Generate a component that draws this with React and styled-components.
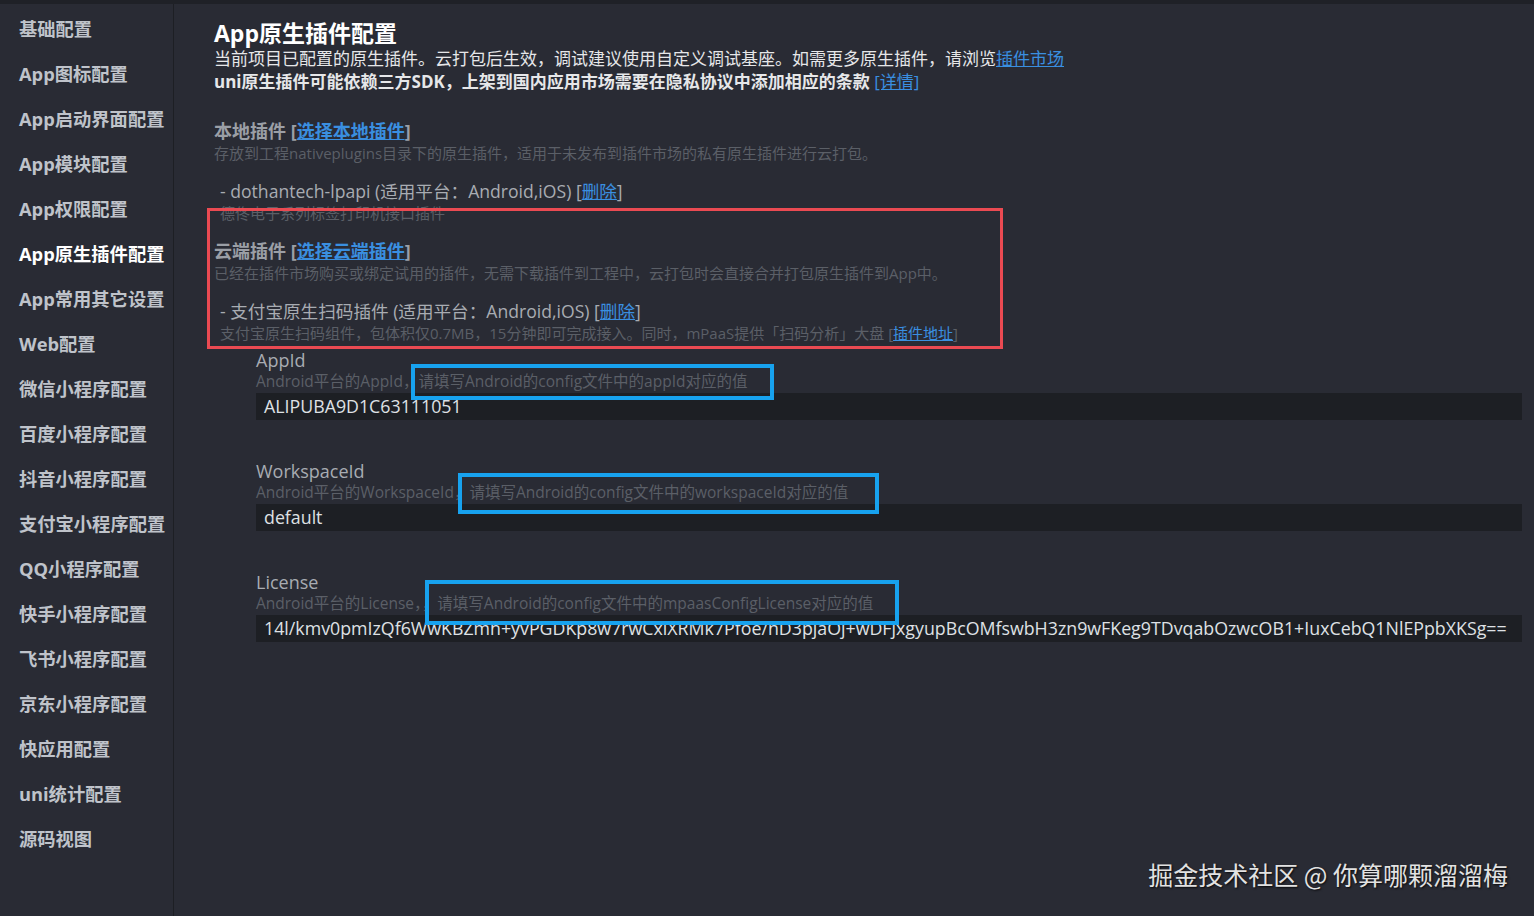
import React from "react";
import styled, { createGlobalStyle } from "styled-components";

const GlobalStyle = createGlobalStyle`
  html, body { margin: 0; padding: 0; background: #292b34; }
  body { font-family: "Open Sans", "Noto Sans CJK SC", sans-serif; }
  * { box-sizing: border-box; }
`;

const Page = styled.div`
  display: flex;
  height: 916px;
  overflow: hidden;
  background: #292b34;
  border-top: 4px solid #1f2127;
  position: relative;
`;

const Sidebar = styled.nav`
  width: 174px;
  flex-shrink: 0;
  border-right: 1px solid #1d1f24;
  padding-top: 2px;
  display: flex;
  flex-direction: column;
`;

const NavItem = styled.div`
  height: 45px;
  line-height: 45px;
  padding-left: 19px;
  font-size: 18.3px;
  font-weight: 700;
  white-space: nowrap;
  color: ${(p) => (p.$active ? "#ffffff" : "#bfc3ca")};
`;

const Main = styled.main`
  flex: 1;
  min-width: 0;
  padding: 15px 12px 0 40px;
  display: flex;
  flex-direction: column;
`;

const Title = styled.h1`
  margin: 0;
  font-size: 23px;
  line-height: 28px;
  font-weight: 700;
  color: #ffffff;
`;

const Lead = styled.p`
  margin: 0;
  font-size: 17px;
  line-height: 23px;
  color: #e6e7e9;
  font-weight: ${(p) => (p.$bold ? 700 : 400)};
  white-space: nowrap;
`;

const Link = styled.a`
  color: #3a8fe0;
  text-decoration: underline;
  cursor: pointer;
  font-weight: ${(p) => (p.$plain ? 400 : "inherit")};
`;

const Section = styled.section`
  position: relative;
  margin-top: ${(p) => p.$top}px;
  display: flex;
  flex-direction: column;
`;

const SectionHead = styled.div`
  font-size: 18px;
  line-height: 24px;
  font-weight: 700;
  color: #9b9fa6;
`;

const Hint = styled.div`
  font-size: 15px;
  line-height: 20px;
  color: #5b5f67;
  white-space: nowrap;
  padding-left: ${(p) => p.$indent || 0}px;
`;

const PluginItem = styled.div`
  margin-top: 16px;
  padding-left: 6px;
  font-size: 17.6px;
  line-height: 24px;
  color: #a8acb2;
  white-space: nowrap;
`;

const RedFrame = styled.div`
  position: absolute;
  left: -7px;
  top: -31px;
  width: 796px;
  height: 141px;
  border: 3px solid #ea4a52;
  pointer-events: none;
`;

const Fields = styled.div`
  margin-top: 6px;
  padding-left: 42px;
  display: flex;
  flex-direction: column;
  gap: 40px;
`;

const Field = styled.div`
  display: flex;
  flex-direction: column;
`;

const FieldLabel = styled.div`
  font-size: 18px;
  line-height: 22px;
  color: #a8acb2;
`;

const FieldHint = styled.div`
  font-size: 15.5px;
  line-height: 20px;
  height: 20px;
  color: #5b5f67;
  white-space: nowrap;
`;

const Boxed = styled.span`
  position: relative;
  display: inline-block;
  line-height: 20px;
  &::after {
    content: "";
    position: absolute;
    left: ${(p) => p.$l}px;
    right: ${(p) => p.$r}px;
    top: ${(p) => p.$t}px;
    bottom: ${(p) => p.$b}px;
    border: 4px solid #17a2ef;
    pointer-events: none;
  }
`;

const Input = styled.div`
  margin-top: 2px;
  height: 27px;
  line-height: 27px;
  padding: 0 8px;
  background: #1d1f24;
  font-size: 17.8px;
  color: #dfe1e5;
  white-space: nowrap;
  overflow: hidden;
`;

const Watermark = styled.div`
  position: absolute;
  right: 26px;
  bottom: 24px;
  font-family: "Noto Sans CJK SC", sans-serif;
  font-size: 25px;
  color: #e2e2e2;
  text-shadow: 1px 1px 2px rgba(0, 0, 0, 0.8);
  white-space: nowrap;
`;

const navItems = [
  "基础配置",
  "App图标配置",
  "App启动界面配置",
  "App模块配置",
  "App权限配置",
  "App原生插件配置",
  "App常用其它设置",
  "Web配置",
  "微信小程序配置",
  "百度小程序配置",
  "抖音小程序配置",
  "支付宝小程序配置",
  "QQ小程序配置",
  "快手小程序配置",
  "飞书小程序配置",
  "京东小程序配置",
  "快应用配置",
  "uni统计配置",
  "源码视图",
];

const fields = [
  {
    label: "AppId",
    prefix: "Android平台的AppId，",
    hint: "请填写Android的config文件中的appId对应的值",
    box: { l: -7, r: -27, t: -7, b: -9 },
    value: "ALIPUBA9D1C63111051",
  },
  {
    label: "WorkspaceId",
    prefix: "Android平台的WorkspaceId，",
    hint: "请填写Android的config文件中的workspaceId对应的值",
    box: { l: -11, r: -31, t: -9, b: -12 },
    value: "default",
  },
  {
    label: "License",
    prefix: "Android平台的License，，",
    hint: "请填写Android的config文件中的mpaasConfigLicense对应的值",
    box: { l: -12, r: -26, t: -13, b: -12 },
    value:
      "14l/kmv0pmIzQf6WwKBZmh+yvPGDKp8w7rwCxiXRMk7Pfoe/nD3pjaOj+wDFjxgyupBcOMfswbH3zn9wFKeg9TDvqabOzwcOB1+IuxCebQ1NlEPpbXKSg==",
  },
];

export default function App() {
  return (
    <>
      <GlobalStyle />
      <Page>
        <Sidebar>
          {navItems.map((n) => (
            <NavItem key={n} $active={n === "App原生插件配置"}>
              {n}
            </NavItem>
          ))}
        </Sidebar>
        <Main>
          <Title>App原生插件配置</Title>
          <Lead>
            当前项目已配置的原生插件。云打包后生效，调试建议使用自定义调试基座。如需更多原生插件，请浏览
            <Link>插件市场</Link>
          </Lead>
          <Lead $bold>
            uni原生插件可能依赖三方SDK，上架到国内应用市场需要在隐私协议中添加相应的条款{" "}
            <Link $plain>[详情]</Link>
          </Lead>

          <Section $top={26}>
            <SectionHead>
              本地插件 [<Link>选择本地插件</Link>]
            </SectionHead>
            <Hint>
              存放到工程nativeplugins目录下的原生插件，适用于未发布到插件市场的私有原生插件进行云打包。
            </Hint>
            <PluginItem>
              - dothantech-lpapi (适用平台：Android,iOS) [<Link>删除</Link>]
            </PluginItem>
            <Hint $indent={6}>德佟电子系列标签打印机接口插件</Hint>
          </Section>

          <Section $top={16}>
            <RedFrame />
            <SectionHead>
              云端插件 [<Link>选择云端插件</Link>]
            </SectionHead>
            <Hint>
              已经在插件市场购买或绑定试用的插件，无需下载插件到工程中，云打包时会直接合并打包原生插件到App中。
            </Hint>
            <PluginItem>
              - 支付宝原生扫码插件 (适用平台：Android,iOS) [<Link>删除</Link>]
            </PluginItem>
            <Hint $indent={6}>
              支付宝原生扫码组件，包体积仅0.7MB，15分钟即可完成接入。同时，mPaaS提供「扫码分析」大盘 [
              <Link>插件地址</Link>]
            </Hint>
          </Section>

          <Fields>
            {fields.map((f) => (
              <Field key={f.label}>
                <FieldLabel>{f.label}</FieldLabel>
                <FieldHint>
                  {f.prefix}
                  <Boxed $l={f.box.l} $r={f.box.r} $t={f.box.t} $b={f.box.b}>
                    {f.hint}
                  </Boxed>
                </FieldHint>
                <Input>{f.value}</Input>
              </Field>
            ))}
          </Fields>
        </Main>
        <Watermark>掘金技术社区 @ 你算哪颗溜溜梅</Watermark>
      </Page>
    </>
  );
}
